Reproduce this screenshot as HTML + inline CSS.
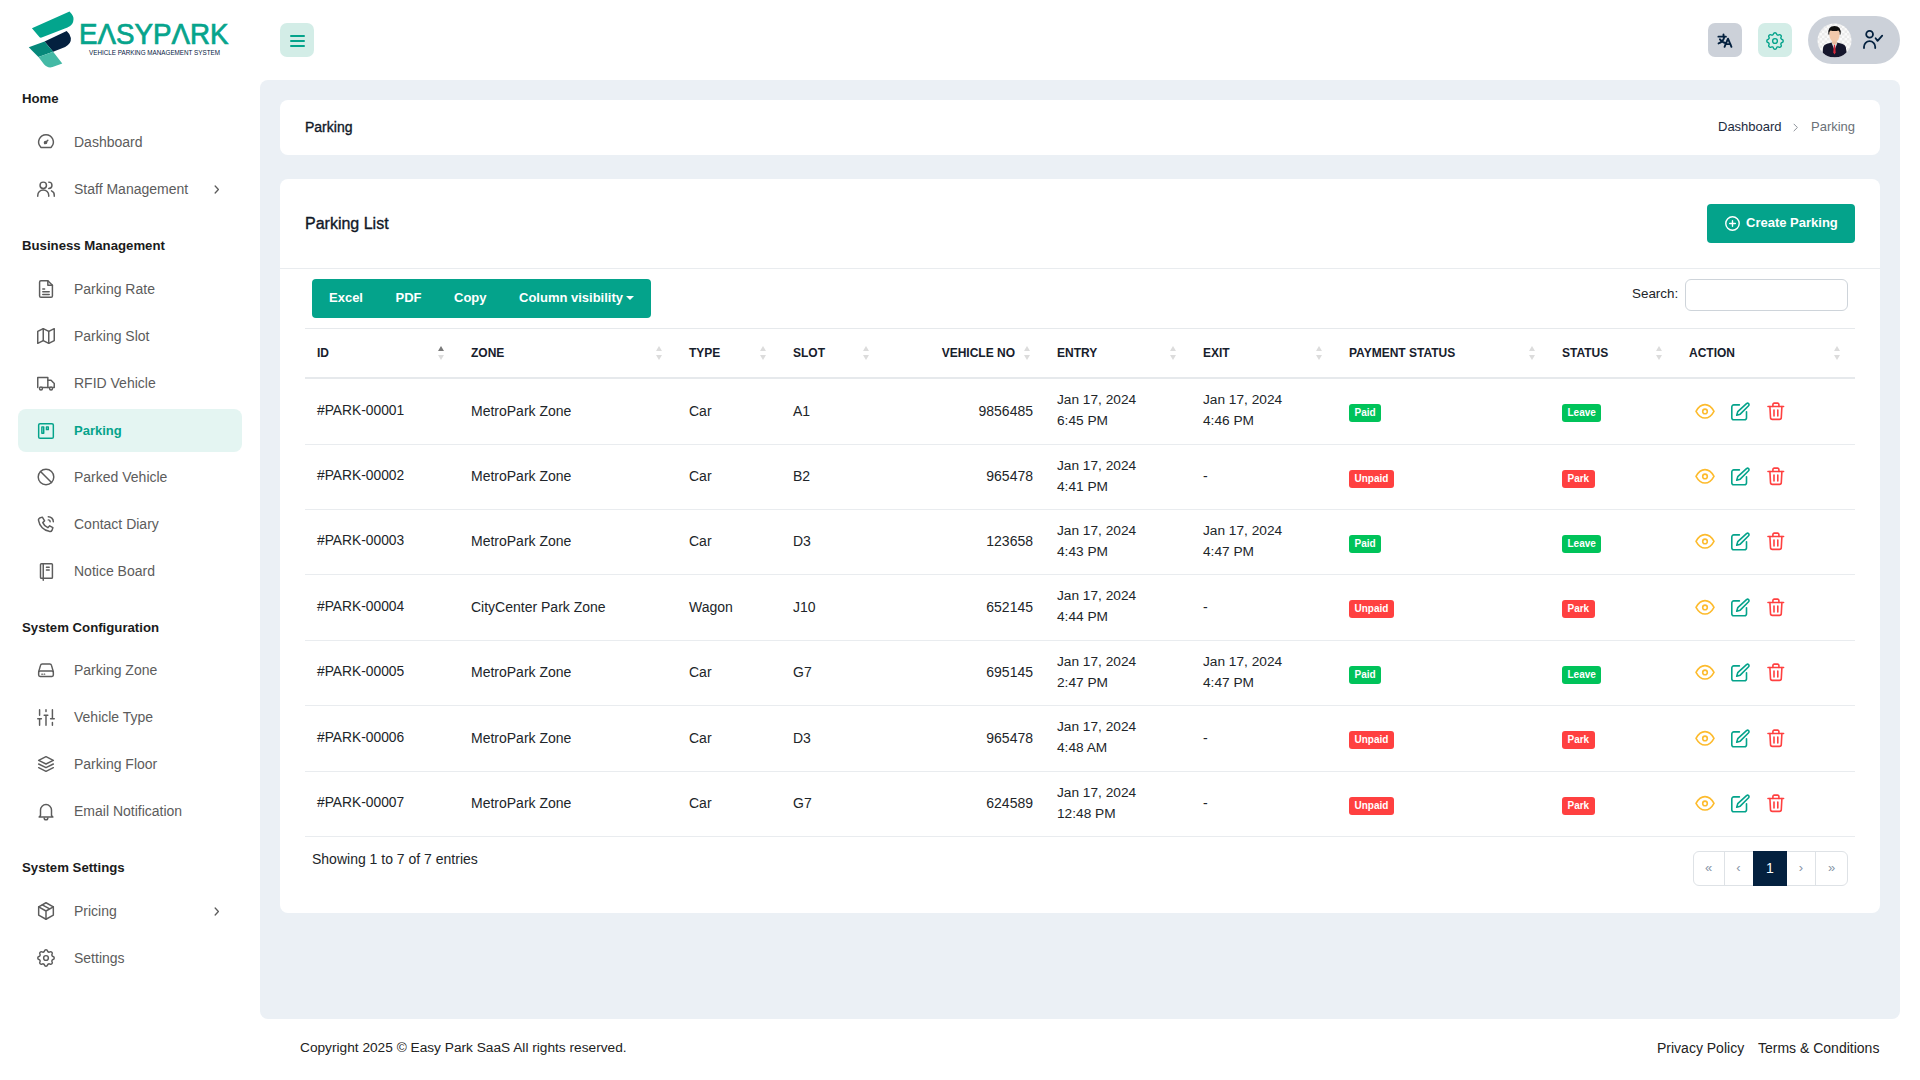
<!DOCTYPE html>
<html><head><meta charset="utf-8">
<style>
*{box-sizing:border-box;margin:0;padding:0}
html,body{width:1920px;height:1080px;overflow:hidden;background:#fff}
body{position:relative;font-family:"Liberation Sans",sans-serif;color:#212529}
.abs{position:absolute}
.sec{position:absolute;left:22px;font-size:13.2px;font-weight:bold;color:#1b1b1b;line-height:20px;height:20px;white-space:nowrap}
.item{position:absolute;left:18px;width:224px;height:43px;border-radius:8px;display:flex;align-items:center;font-size:14px;color:#5c5c5c;white-space:nowrap}
.item svg{position:absolute;left:16.75px;top:10.5px;width:22px;height:22px;fill:none;stroke:#5c5c5c;stroke-width:1.6;stroke-linecap:round;stroke-linejoin:round}
.item span{position:absolute;left:56px;line-height:20px;top:11.75px}
.item .chev{position:absolute;left:193px;top:15px;width:12px;height:12px;stroke-width:1.6}
.item.active{background:#e4f5f2;color:#04a38b;font-weight:bold;font-size:13px}
.item.active svg{stroke:#04a38b}
.hbtn{position:absolute;top:23px;width:34px;height:34px;border-radius:7px}

.med{-webkit-text-stroke:0.35px currentColor}
.th{position:absolute;top:342.5px;font-size:12px;font-weight:bold;color:#17202c;line-height:20px;white-space:nowrap}
.sort{position:absolute;top:346px;width:8px;height:15px}
.sort i{position:absolute;left:0;width:0;height:0;border-left:3.5px solid transparent;border-right:3.5px solid transparent}
.sort .up{top:0;border-bottom:5.5px solid #dcdcdc}
.sort .dn{top:9px;border-top:5.5px solid #dcdcdc}
.sort.asc .up{border-bottom-color:#7a7a7a}
.td{position:absolute;font-size:14px;color:#212529;line-height:20px;white-space:nowrap}
.td.id{font-size:13.8px}
.td2{position:absolute;font-size:13.7px;color:#212529;line-height:21px;white-space:nowrap}
.badge{position:absolute;height:18px;line-height:18px;padding:0 5.5px;font-size:10px;font-weight:bold;color:#fff;border-radius:3px;white-space:nowrap}
.bg-s{background:#00c35a}
.bg-d{background:#ff4040}
.ico{position:absolute;width:24px;height:24px;fill:none;stroke-width:1.6;stroke-linecap:round;stroke-linejoin:round}
.eye{stroke:#fdbb2d}
.edit{stroke:#04a38b}
.del{stroke:#ff4040}
</style></head>
<body>
<!-- LOGO -->
<svg class="abs" style="left:20px;top:5px" width="220" height="70" viewBox="0 0 1920 611">
  <path d="M104 202 L432 56 Q470 95 467 125 Q466 150 455 165 Q440 185 414 197 L189 284 Q178 287 171 282 Z" fill="#03a58d"/>
  <path d="M214 319 L407 227 Q440 255 444 287 Q446 315 434 332 Q418 355 394 367 L289 407 Z" fill="#04213f"/>
  <path d="M76 369 L214 319 L289 407 L161 454 Z" fill="#06887a"/>
  <path d="M161 454 L289 407 L369 510 L284 542 Q255 550 234 537 Q218 528 209 517 Z" fill="#44b9a5"/>
</svg>
<div class="abs" style="left:79px;top:16.9px;font-size:28px;font-weight:normal;-webkit-text-stroke:0.7px #07a48c;color:#07a48c;letter-spacing:0px;line-height:34px;transform:scale(0.99,1.05);transform-origin:0 0;white-space:nowrap">EΛSYPΛRK</div>
<div class="abs" style="left:89px;top:48.8px;font-size:6.3px;color:#05213f;line-height:8px;letter-spacing:0px;white-space:nowrap">VEHICLE PARKING MANAGEMENT SYSTEM</div>

<!-- SIDEBAR -->
<div class="sec" style="top:89px">Home</div>
<div class="item" style="top:120px"><svg viewBox="0 0 24 24"><path d="M12 4a8 8 0 0 0-6 13.3l.7.7h10.6l.7-.7A8 8 0 0 0 12 4z"/><path d="M10.5 13.5l3.5-3.5"/><circle cx="11.5" cy="12.5" r="1.2"/></svg><span>Dashboard</span></div>
<div class="item" style="top:167px"><svg viewBox="0 0 24 24"><circle cx="9" cy="8" r="3.5"/><path d="M3 20v-1a6 6 0 0 1 12 0v1"/><path d="M15 4.5a3.5 3.5 0 0 1 0 7"/><path d="M18 14a5 5 0 0 1 3 5v1"/></svg><span>Staff Management</span><svg class="chev" viewBox="0 0 24 24" style="left:192px;top:16px;width:13px;height:13px;stroke-width:2.4"><path d="M9.5 5.5l6 6.5-6 6.5"/></svg></div>

<div class="sec" style="top:236px">Business Management</div>
<div class="item" style="top:267px"><svg viewBox="0 0 24 24"><path d="M5 4.5A1.5 1.5 0 0 1 6.5 3H14l5 5v11.5a1.5 1.5 0 0 1-1.5 1.5h-11A1.5 1.5 0 0 1 5 19.5z"/><path d="M14 3v5h5"/><path d="M8.5 12h2M8.5 15h7M8.5 18h7"/></svg><span>Parking Rate</span></div>
<div class="item" style="top:314px"><svg viewBox="0 0 24 24"><path d="M3 7l6-3 6 3 6-3v13l-6 3-6-3-6 3z"/><path d="M9 4v13M15 7v13"/></svg><span>Parking Slot</span></div>
<div class="item" style="top:361px"><svg viewBox="0 0 24 24"><path d="M3 17V6h11v11"/><path d="M14 9h3.5l3.5 3.5V17h-1.5"/><circle cx="6.5" cy="18" r="1.6"/><circle cx="17.5" cy="18" r="1.6"/><path d="M8 17h8"/></svg><span>RFID Vehicle</span></div>
<div class="item active" style="top:409px"><svg viewBox="0 0 24 24"><rect x="4" y="4" width="16" height="16" rx="1.5"/><rect x="7.5" y="7.5" width="2" height="7"/><rect x="12.5" y="7.5" width="2" height="3"/></svg><span>Parking</span></div>
<div class="item" style="top:455px"><svg viewBox="0 0 24 24"><circle cx="12" cy="12" r="8.5"/><path d="M6 6l12 12"/></svg><span>Parked Vehicle</span></div>
<div class="item" style="top:502px"><svg viewBox="0 0 24 24"><path d="M14.5 4a5.5 5.5 0 0 1 5.5 5.5"/><path d="M14.5 7.5a2 2 0 0 1 2 2"/><path d="M8 4.5L5 5.5c-1 .5-1.5 1.5-1 3a14 14 0 0 0 11.5 11.5c1.5.5 2.5 0 3-1l1-3-3.5-2-2 2a10 10 0 0 1-5.5-5.5l2-2z"/></svg><span>Contact Diary</span></div>
<div class="item" style="top:549px"><svg viewBox="0 0 24 24"><rect x="6" y="4" width="13" height="16" rx="1"/><path d="M9 4v18"/><path d="M12.5 8h3M12.5 11h3"/></svg><span>Notice Board</span></div>

<div class="sec" style="top:618px">System Configuration</div>
<div class="item" style="top:648px"><svg viewBox="0 0 24 24"><path d="M4 14l2-7a2 2 0 0 1 2-1.5h8a2 2 0 0 1 2 1.5l2 7"/><rect x="4" y="13" width="16" height="6" rx="1.5"/><path d="M7.5 16.5h.5M10 16.5h.5"/></svg><span>Parking Zone</span></div>
<div class="item" style="top:695px"><svg viewBox="0 0 24 24"><path d="M5 4v6M5 14v7M3 14h4M12 4v2M12 10v11M10 10h4M19 4v10M19 18v3M17 14h4"/></svg><span>Vehicle Type</span></div>
<div class="item" style="top:742px"><svg viewBox="0 0 24 24"><path d="M12 4l8 4-8 4-8-4z"/><path d="M4 12l8 4 8-4"/><path d="M4 16l8 4 8-4"/></svg><span>Parking Floor</span></div>
<div class="item" style="top:789px"><svg viewBox="0 0 24 24"><path d="M6 17V11a6 6 0 0 1 12 0v6l1.5 1.5h-15z"/><path d="M10 19.5a2 2 0 0 0 4 0"/></svg><span>Email Notification</span></div>

<div class="sec" style="top:858px">System Settings</div>
<div class="item" style="top:889px"><svg viewBox="0 0 24 24"><path d="M12 3l8 4.5v9L12 21l-8-4.5v-9z"/><path d="M4 7.5l8 4.5 8-4.5M12 12v9M8 5.3l8 4.5"/></svg><span>Pricing</span><svg class="chev" viewBox="0 0 24 24" style="left:192px;top:16px;width:13px;height:13px;stroke-width:2.4"><path d="M9.5 5.5l6 6.5-6 6.5"/></svg></div>
<div class="item" style="top:936px"><svg viewBox="0 0 24 24"><path d="M10.325 4.317c.426-1.756 2.924-1.756 3.35 0a1.724 1.724 0 0 0 2.573 1.066c1.543-.94 3.31.826 2.37 2.37a1.724 1.724 0 0 0 1.065 2.572c1.756.426 1.756 2.924 0 3.35a1.724 1.724 0 0 0-1.066 2.573c.94 1.543-.826 3.31-2.37 2.37a1.724 1.724 0 0 0-2.572 1.065c-.426 1.756-2.924 1.756-3.35 0a1.724 1.724 0 0 0-2.573-1.066c-1.543.94-3.31-.826-2.37-2.37a1.724 1.724 0 0 0-1.065-2.572c-1.756-.426-1.756-2.924 0-3.35a1.724 1.724 0 0 0 1.066-2.573c-.94-1.543.826-3.31 2.37-2.37c1 .608 2.296.07 2.572-1.065z"/><circle cx="12" cy="12" r="2.6"/></svg><span>Settings</span></div>

<!-- HEADER -->
<div class="hbtn" style="left:280px;background:#d3ede7">
  <div class="abs" style="left:10px;top:12px;width:15px;height:2px;background:#04a38b;border-radius:1px"></div>
  <div class="abs" style="left:10px;top:17px;width:15px;height:2px;background:#04a38b;border-radius:1px"></div>
  <div class="abs" style="left:10px;top:22px;width:15px;height:2px;background:#04a38b;border-radius:1px"></div>
</div>
<div class="hbtn" style="left:1708px;background:#ccd1d9">
  <svg class="abs" style="left:8px;top:9px" width="18" height="18" viewBox="0 0 24 24" fill="none" stroke="#04213f" stroke-width="2.5" stroke-linecap="round" stroke-linejoin="round"><path d="M3.2 6.2h10"/><path d="M10 3.4v2.8"/><path d="M11.2 6.4c-1 4.2-3.6 7.4-7.8 8.9"/><path d="M5.2 9.6c1.6 2.8 4.4 4.6 8.2 5.4"/><path d="M11.4 19.8l4.6-11 4.6 11"/><path d="M12.9 16.2h6.2"/></svg>
</div>
<div class="hbtn" style="left:1758px;background:#d3ede7">
  <svg class="abs" style="left:6.3px;top:7px" width="22" height="22" viewBox="0 0 24 24" fill="none" stroke="#04a38b" stroke-width="1.5" stroke-linecap="round" stroke-linejoin="round"><path d="M10.325 4.317c.426-1.756 2.924-1.756 3.35 0a1.724 1.724 0 0 0 2.573 1.066c1.543-.94 3.31.826 2.37 2.37a1.724 1.724 0 0 0 1.065 2.572c1.756.426 1.756 2.924 0 3.35a1.724 1.724 0 0 0-1.066 2.573c.94 1.543-.826 3.31-2.37 2.37a1.724 1.724 0 0 0-2.572 1.065c-.426 1.756-2.924 1.756-3.35 0a1.724 1.724 0 0 0-2.573-1.066c-1.543.94-3.31-.826-2.37-2.37a1.724 1.724 0 0 0-1.065-2.572c-1.756-.426-1.756-2.924 0-3.35a1.724 1.724 0 0 0 1.066-2.573c-.94-1.543.826-3.31 2.37-2.37c1 .608 2.296.07 2.572-1.065z"/><circle cx="12" cy="12" r="2.6"/></svg>
</div>
<div class="abs" style="left:1808px;top:16px;width:92px;height:48px;border-radius:24px;background:#ccd1d9">
  <svg class="abs" style="left:8.5px;top:6.5px" width="35" height="35" viewBox="0 0 35 35">
    <defs><clipPath id="avc"><circle cx="17.5" cy="17.5" r="17"/></clipPath>
    <pattern id="chk" width="5" height="5" patternUnits="userSpaceOnUse"><rect width="5" height="5" fill="#fafafa"/><rect width="2.5" height="2.5" fill="#ebebeb"/><rect x="2.5" y="2.5" width="2.5" height="2.5" fill="#ebebeb"/></pattern></defs>
    <g clip-path="url(#avc)">
      <rect width="35" height="35" fill="url(#chk)"/>
      <path d="M5.2 33.5 L6.2 24 Q7 21.5 10 20.8 L15 19.5 L20 19.5 L25 20.8 Q28 21.5 28.8 24 L30.2 33.5 Q17.5 35.5 5.2 33.5z" fill="#15162c"/>
      <path d="M14.5 19.6 L17.5 27 L20.5 19.6z" fill="#e9f6f6"/>
      <path d="M14.3 19.8 L16 23 L17.5 21 L19 23 L20.7 19.8 L21.5 21.5 L17.5 30 L13.5 21.5z" fill="#15162c" opacity="0"/>
      <path d="M16.9 21.2 L18.1 21.2 L18.7 29.5 L17.5 31.5 L16.3 29.5z" fill="#d62639"/>
      <path d="M15.3 16 L19.7 16 L19.9 20.5 L17.5 22 L15.1 20.5z" fill="#e9bea0"/>
      <path d="M12.3 7 L12.3 11 Q12.6 18.6 17.5 18.8 Q22.4 18.6 22.7 11 L22.7 7z" fill="#f2c9ab"/>
      <path d="M11.4 11 Q10.6 3 17.5 3 Q24.4 3 23.6 11 L22.9 12.2 Q23 8.5 21.5 7.6 Q17.5 8.6 13.5 7.6 Q12 8.5 12.1 12.2z" fill="#0e0e0e"/>
    </g>
  </svg>
  <svg class="abs" style="left:53px;top:11px" width="24" height="24" viewBox="0 0 24 24" fill="none" stroke="#04213f" stroke-width="1.8" stroke-linecap="round" stroke-linejoin="round"><circle cx="8.6" cy="7.2" r="3.4"/><path d="M3 21v-1.2a5.6 5.6 0 0 1 11.2 0v1.2"/><path d="M14.6 11.3l2 2.6 4.6-5.3"/></svg>
</div>

<!-- CONTENT BG -->
<div class="abs" style="left:260px;top:80px;width:1640px;height:939px;background:#ebf0f5;border-radius:8px"></div>
<div class="abs" style="left:280px;top:100px;width:1600px;height:55px;background:#fff;border-radius:8px"></div>
<div class="abs" style="left:280px;top:179px;width:1600px;height:734px;background:#fff;border-radius:8px"></div>


<!-- CARD1 -->
<div class="abs med" style="left:305px;top:116.5px;font-size:14px;line-height:20px;color:#111827">Parking</div>
<div class="abs" style="left:1718px;top:117px;font-size:13px;line-height:20px;color:#1c2b3e">Dashboard</div>
<svg class="abs" style="left:1791px;top:123px" width="9" height="9" viewBox="0 0 24 24" fill="none" stroke="#8a8f96" stroke-width="2.6" stroke-linecap="round"><path d="M8 3l9 9-9 9"/></svg>
<div class="abs" style="left:1811px;top:117px;font-size:13px;line-height:20px;color:#6b7178">Parking</div>

<!-- CARD2 HEADER -->
<div class="abs med" style="left:305px;top:214px;font-size:16px;line-height:20px;color:#111827">Parking List</div>
<div class="abs" style="left:280px;top:268px;width:1600px;height:1px;background:#e9ecef"></div>
<div class="abs" style="left:1707px;top:204px;width:148px;height:39px;border-radius:4px;background:#04a38b">
  <svg class="abs" style="left:17px;top:11px" width="17" height="17" viewBox="0 0 24 24" fill="none" stroke="#fff" stroke-width="2" stroke-linecap="round"><circle cx="12" cy="12" r="9.5"/><path d="M12 8v8M8 12h8"/></svg>
  <div class="abs" style="left:39px;top:9px;font-size:13px;font-weight:bold;line-height:20px;color:#fff;white-space:nowrap">Create Parking</div>
</div>

<!-- BUTTON GROUP -->
<div class="abs" style="left:312px;top:279px;width:339px;height:39px;border-radius:4px;background:#04a38b"></div>
<div class="abs" style="left:329px;top:288px;font-size:13px;font-weight:bold;line-height:20px;color:#fff">Excel</div>
<div class="abs" style="left:395.5px;top:288px;font-size:13px;font-weight:bold;line-height:20px;color:#fff">PDF</div>
<div class="abs" style="left:454px;top:288px;font-size:13px;font-weight:bold;line-height:20px;color:#fff">Copy</div>
<div class="abs" style="left:519px;top:288px;font-size:13px;font-weight:bold;line-height:20px;color:#fff;white-space:nowrap">Column visibility</div>
<div class="abs" style="left:626px;top:296px;width:0;height:0;border-left:4px solid transparent;border-right:4px solid transparent;border-top:4.5px solid #fff"></div>

<!-- SEARCH -->
<div class="abs" style="left:1632px;top:283.5px;font-size:13.4px;line-height:20px;color:#212529">Search:</div>
<div class="abs" style="left:1685px;top:279px;width:163px;height:32px;border:1px solid #ced4da;border-radius:6px;background:#fff"></div>

<!--TABLE-->
<div class="abs" style="left:305px;top:328px;width:1550px;height:1px;background:#e6e9ec"></div>
<div class="abs" style="left:305px;top:377px;width:1550px;height:2px;background:#e6e9ec"></div>
<div class="th" style="left:317px">ID</div>
<div class="sort asc" style="left:437.5px"><i class="up"></i><i class="dn"></i></div>
<div class="th" style="left:471px">ZONE</div>
<div class="sort" style="left:655.5px"><i class="up"></i><i class="dn"></i></div>
<div class="th" style="left:689px">TYPE</div>
<div class="sort" style="left:759.5px"><i class="up"></i><i class="dn"></i></div>
<div class="th" style="left:793px">SLOT</div>
<div class="sort" style="left:862.5px"><i class="up"></i><i class="dn"></i></div>
<div class="th" style="left:884px;width:131px;text-align:right">VEHICLE NO</div>
<div class="sort" style="left:1023.5px"><i class="up"></i><i class="dn"></i></div>
<div class="th" style="left:1057px">ENTRY</div>
<div class="sort" style="left:1169.5px"><i class="up"></i><i class="dn"></i></div>
<div class="th" style="left:1203px">EXIT</div>
<div class="sort" style="left:1315.5px"><i class="up"></i><i class="dn"></i></div>
<div class="th" style="left:1349px">PAYMENT STATUS</div>
<div class="sort" style="left:1528.5px"><i class="up"></i><i class="dn"></i></div>
<div class="th" style="left:1562px">STATUS</div>
<div class="sort" style="left:1655.5px"><i class="up"></i><i class="dn"></i></div>
<div class="th" style="left:1689px">ACTION</div>
<div class="sort" style="left:1833.5px"><i class="up"></i><i class="dn"></i></div>
<div class="abs" style="left:305px;top:444px;width:1550px;height:1px;background:#e9ecef"></div>
<div class="td id" style="left:317px;top:400.5px">#PARK-00001</div>
<div class="td" style="left:471px;top:400.5px">MetroPark Zone</div>
<div class="td" style="left:689px;top:400.5px">Car</div>
<div class="td" style="left:793px;top:400.5px">A1</div>
<div class="td" style="left:884px;width:149px;text-align:right;top:400.5px">9856485</div>
<div class="td2" style="left:1057px;top:389.0px">Jan 17, 2024<br>6:45 PM</div>
<div class="td2" style="left:1203px;top:389.0px">Jan 17, 2024<br>4:46 PM</div>
<div class="badge bg-s" style="left:1349px;top:404.0px">Paid</div>
<div class="badge bg-s" style="left:1562px;top:404.0px">Leave</div>
<svg class="ico eye" style="left:1693px;top:399.5px" viewBox="0 0 24 24"><circle cx="12" cy="11.4" r="2.3"/><path d="M3 11.3C5.6 6.6 8.6 4.6 12 4.6C15.4 4.6 18.4 6.6 21 11.3C18.4 16 15.4 18 12 18C8.6 18 5.6 16 3 11.3z"/></svg>
<svg class="ico edit" style="left:1728px;top:399.5px" viewBox="0 0 24 24"><path d="M11.4 4.9H5.8a2 2 0 0 0-2 2v10.8a2 2 0 0 0 2 2h10.7a2 2 0 0 0 2-2v-5.9"/><path d="M18.5 3.7a1.45 1.45 0 0 1 2.1 2.05l-8.4 8.4-3.5 1.05 1.05-3.5z"/></svg>
<svg class="ico del" style="left:1764px;top:399.5px" viewBox="0 0 24 24"><path d="M4 6.5h15.6"/><path d="M10 10v6M13.8 10v6"/><path d="M5.9 6.5l.6 11a1.9 1.9 0 0 0 1.9 1.9h7a1.9 1.9 0 0 0 1.9-1.9l.6-11"/><path d="M8.9 6.5V4.4a1.3 1.3 0 0 1 1.3-1.3h3.4a1.3 1.3 0 0 1 1.3 1.3v2.1"/></svg>
<div class="abs" style="left:305px;top:509px;width:1550px;height:1px;background:#e9ecef"></div>
<div class="td id" style="left:317px;top:466.0px">#PARK-00002</div>
<div class="td" style="left:471px;top:466.0px">MetroPark Zone</div>
<div class="td" style="left:689px;top:466.0px">Car</div>
<div class="td" style="left:793px;top:466.0px">B2</div>
<div class="td" style="left:884px;width:149px;text-align:right;top:466.0px">965478</div>
<div class="td2" style="left:1057px;top:454.5px">Jan 17, 2024<br>4:41 PM</div>
<div class="td" style="left:1203px;top:466.0px">-</div>
<div class="badge bg-d" style="left:1349px;top:469.5px">Unpaid</div>
<div class="badge bg-d" style="left:1562px;top:469.5px">Park</div>
<svg class="ico eye" style="left:1693px;top:465.0px" viewBox="0 0 24 24"><circle cx="12" cy="11.4" r="2.3"/><path d="M3 11.3C5.6 6.6 8.6 4.6 12 4.6C15.4 4.6 18.4 6.6 21 11.3C18.4 16 15.4 18 12 18C8.6 18 5.6 16 3 11.3z"/></svg>
<svg class="ico edit" style="left:1728px;top:465.0px" viewBox="0 0 24 24"><path d="M11.4 4.9H5.8a2 2 0 0 0-2 2v10.8a2 2 0 0 0 2 2h10.7a2 2 0 0 0 2-2v-5.9"/><path d="M18.5 3.7a1.45 1.45 0 0 1 2.1 2.05l-8.4 8.4-3.5 1.05 1.05-3.5z"/></svg>
<svg class="ico del" style="left:1764px;top:465.0px" viewBox="0 0 24 24"><path d="M4 6.5h15.6"/><path d="M10 10v6M13.8 10v6"/><path d="M5.9 6.5l.6 11a1.9 1.9 0 0 0 1.9 1.9h7a1.9 1.9 0 0 0 1.9-1.9l.6-11"/><path d="M8.9 6.5V4.4a1.3 1.3 0 0 1 1.3-1.3h3.4a1.3 1.3 0 0 1 1.3 1.3v2.1"/></svg>
<div class="abs" style="left:305px;top:574px;width:1550px;height:1px;background:#e9ecef"></div>
<div class="td id" style="left:317px;top:531.0px">#PARK-00003</div>
<div class="td" style="left:471px;top:531.0px">MetroPark Zone</div>
<div class="td" style="left:689px;top:531.0px">Car</div>
<div class="td" style="left:793px;top:531.0px">D3</div>
<div class="td" style="left:884px;width:149px;text-align:right;top:531.0px">123658</div>
<div class="td2" style="left:1057px;top:519.5px">Jan 17, 2024<br>4:43 PM</div>
<div class="td2" style="left:1203px;top:519.5px">Jan 17, 2024<br>4:47 PM</div>
<div class="badge bg-s" style="left:1349px;top:534.5px">Paid</div>
<div class="badge bg-s" style="left:1562px;top:534.5px">Leave</div>
<svg class="ico eye" style="left:1693px;top:530.0px" viewBox="0 0 24 24"><circle cx="12" cy="11.4" r="2.3"/><path d="M3 11.3C5.6 6.6 8.6 4.6 12 4.6C15.4 4.6 18.4 6.6 21 11.3C18.4 16 15.4 18 12 18C8.6 18 5.6 16 3 11.3z"/></svg>
<svg class="ico edit" style="left:1728px;top:530.0px" viewBox="0 0 24 24"><path d="M11.4 4.9H5.8a2 2 0 0 0-2 2v10.8a2 2 0 0 0 2 2h10.7a2 2 0 0 0 2-2v-5.9"/><path d="M18.5 3.7a1.45 1.45 0 0 1 2.1 2.05l-8.4 8.4-3.5 1.05 1.05-3.5z"/></svg>
<svg class="ico del" style="left:1764px;top:530.0px" viewBox="0 0 24 24"><path d="M4 6.5h15.6"/><path d="M10 10v6M13.8 10v6"/><path d="M5.9 6.5l.6 11a1.9 1.9 0 0 0 1.9 1.9h7a1.9 1.9 0 0 0 1.9-1.9l.6-11"/><path d="M8.9 6.5V4.4a1.3 1.3 0 0 1 1.3-1.3h3.4a1.3 1.3 0 0 1 1.3 1.3v2.1"/></svg>
<div class="abs" style="left:305px;top:640px;width:1550px;height:1px;background:#e9ecef"></div>
<div class="td id" style="left:317px;top:596.5px">#PARK-00004</div>
<div class="td" style="left:471px;top:596.5px">CityCenter Park Zone</div>
<div class="td" style="left:689px;top:596.5px">Wagon</div>
<div class="td" style="left:793px;top:596.5px">J10</div>
<div class="td" style="left:884px;width:149px;text-align:right;top:596.5px">652145</div>
<div class="td2" style="left:1057px;top:585.0px">Jan 17, 2024<br>4:44 PM</div>
<div class="td" style="left:1203px;top:596.5px">-</div>
<div class="badge bg-d" style="left:1349px;top:600.0px">Unpaid</div>
<div class="badge bg-d" style="left:1562px;top:600.0px">Park</div>
<svg class="ico eye" style="left:1693px;top:595.5px" viewBox="0 0 24 24"><circle cx="12" cy="11.4" r="2.3"/><path d="M3 11.3C5.6 6.6 8.6 4.6 12 4.6C15.4 4.6 18.4 6.6 21 11.3C18.4 16 15.4 18 12 18C8.6 18 5.6 16 3 11.3z"/></svg>
<svg class="ico edit" style="left:1728px;top:595.5px" viewBox="0 0 24 24"><path d="M11.4 4.9H5.8a2 2 0 0 0-2 2v10.8a2 2 0 0 0 2 2h10.7a2 2 0 0 0 2-2v-5.9"/><path d="M18.5 3.7a1.45 1.45 0 0 1 2.1 2.05l-8.4 8.4-3.5 1.05 1.05-3.5z"/></svg>
<svg class="ico del" style="left:1764px;top:595.5px" viewBox="0 0 24 24"><path d="M4 6.5h15.6"/><path d="M10 10v6M13.8 10v6"/><path d="M5.9 6.5l.6 11a1.9 1.9 0 0 0 1.9 1.9h7a1.9 1.9 0 0 0 1.9-1.9l.6-11"/><path d="M8.9 6.5V4.4a1.3 1.3 0 0 1 1.3-1.3h3.4a1.3 1.3 0 0 1 1.3 1.3v2.1"/></svg>
<div class="abs" style="left:305px;top:705px;width:1550px;height:1px;background:#e9ecef"></div>
<div class="td id" style="left:317px;top:662.0px">#PARK-00005</div>
<div class="td" style="left:471px;top:662.0px">MetroPark Zone</div>
<div class="td" style="left:689px;top:662.0px">Car</div>
<div class="td" style="left:793px;top:662.0px">G7</div>
<div class="td" style="left:884px;width:149px;text-align:right;top:662.0px">695145</div>
<div class="td2" style="left:1057px;top:650.5px">Jan 17, 2024<br>2:47 PM</div>
<div class="td2" style="left:1203px;top:650.5px">Jan 17, 2024<br>4:47 PM</div>
<div class="badge bg-s" style="left:1349px;top:665.5px">Paid</div>
<div class="badge bg-s" style="left:1562px;top:665.5px">Leave</div>
<svg class="ico eye" style="left:1693px;top:661.0px" viewBox="0 0 24 24"><circle cx="12" cy="11.4" r="2.3"/><path d="M3 11.3C5.6 6.6 8.6 4.6 12 4.6C15.4 4.6 18.4 6.6 21 11.3C18.4 16 15.4 18 12 18C8.6 18 5.6 16 3 11.3z"/></svg>
<svg class="ico edit" style="left:1728px;top:661.0px" viewBox="0 0 24 24"><path d="M11.4 4.9H5.8a2 2 0 0 0-2 2v10.8a2 2 0 0 0 2 2h10.7a2 2 0 0 0 2-2v-5.9"/><path d="M18.5 3.7a1.45 1.45 0 0 1 2.1 2.05l-8.4 8.4-3.5 1.05 1.05-3.5z"/></svg>
<svg class="ico del" style="left:1764px;top:661.0px" viewBox="0 0 24 24"><path d="M4 6.5h15.6"/><path d="M10 10v6M13.8 10v6"/><path d="M5.9 6.5l.6 11a1.9 1.9 0 0 0 1.9 1.9h7a1.9 1.9 0 0 0 1.9-1.9l.6-11"/><path d="M8.9 6.5V4.4a1.3 1.3 0 0 1 1.3-1.3h3.4a1.3 1.3 0 0 1 1.3 1.3v2.1"/></svg>
<div class="abs" style="left:305px;top:771px;width:1550px;height:1px;background:#e9ecef"></div>
<div class="td id" style="left:317px;top:727.5px">#PARK-00006</div>
<div class="td" style="left:471px;top:727.5px">MetroPark Zone</div>
<div class="td" style="left:689px;top:727.5px">Car</div>
<div class="td" style="left:793px;top:727.5px">D3</div>
<div class="td" style="left:884px;width:149px;text-align:right;top:727.5px">965478</div>
<div class="td2" style="left:1057px;top:716.0px">Jan 17, 2024<br>4:48 AM</div>
<div class="td" style="left:1203px;top:727.5px">-</div>
<div class="badge bg-d" style="left:1349px;top:731.0px">Unpaid</div>
<div class="badge bg-d" style="left:1562px;top:731.0px">Park</div>
<svg class="ico eye" style="left:1693px;top:726.5px" viewBox="0 0 24 24"><circle cx="12" cy="11.4" r="2.3"/><path d="M3 11.3C5.6 6.6 8.6 4.6 12 4.6C15.4 4.6 18.4 6.6 21 11.3C18.4 16 15.4 18 12 18C8.6 18 5.6 16 3 11.3z"/></svg>
<svg class="ico edit" style="left:1728px;top:726.5px" viewBox="0 0 24 24"><path d="M11.4 4.9H5.8a2 2 0 0 0-2 2v10.8a2 2 0 0 0 2 2h10.7a2 2 0 0 0 2-2v-5.9"/><path d="M18.5 3.7a1.45 1.45 0 0 1 2.1 2.05l-8.4 8.4-3.5 1.05 1.05-3.5z"/></svg>
<svg class="ico del" style="left:1764px;top:726.5px" viewBox="0 0 24 24"><path d="M4 6.5h15.6"/><path d="M10 10v6M13.8 10v6"/><path d="M5.9 6.5l.6 11a1.9 1.9 0 0 0 1.9 1.9h7a1.9 1.9 0 0 0 1.9-1.9l.6-11"/><path d="M8.9 6.5V4.4a1.3 1.3 0 0 1 1.3-1.3h3.4a1.3 1.3 0 0 1 1.3 1.3v2.1"/></svg>
<div class="abs" style="left:305px;top:836px;width:1550px;height:1px;background:#e9ecef"></div>
<div class="td id" style="left:317px;top:793.0px">#PARK-00007</div>
<div class="td" style="left:471px;top:793.0px">MetroPark Zone</div>
<div class="td" style="left:689px;top:793.0px">Car</div>
<div class="td" style="left:793px;top:793.0px">G7</div>
<div class="td" style="left:884px;width:149px;text-align:right;top:793.0px">624589</div>
<div class="td2" style="left:1057px;top:781.5px">Jan 17, 2024<br>12:48 PM</div>
<div class="td" style="left:1203px;top:793.0px">-</div>
<div class="badge bg-d" style="left:1349px;top:796.5px">Unpaid</div>
<div class="badge bg-d" style="left:1562px;top:796.5px">Park</div>
<svg class="ico eye" style="left:1693px;top:792.0px" viewBox="0 0 24 24"><circle cx="12" cy="11.4" r="2.3"/><path d="M3 11.3C5.6 6.6 8.6 4.6 12 4.6C15.4 4.6 18.4 6.6 21 11.3C18.4 16 15.4 18 12 18C8.6 18 5.6 16 3 11.3z"/></svg>
<svg class="ico edit" style="left:1728px;top:792.0px" viewBox="0 0 24 24"><path d="M11.4 4.9H5.8a2 2 0 0 0-2 2v10.8a2 2 0 0 0 2 2h10.7a2 2 0 0 0 2-2v-5.9"/><path d="M18.5 3.7a1.45 1.45 0 0 1 2.1 2.05l-8.4 8.4-3.5 1.05 1.05-3.5z"/></svg>
<svg class="ico del" style="left:1764px;top:792.0px" viewBox="0 0 24 24"><path d="M4 6.5h15.6"/><path d="M10 10v6M13.8 10v6"/><path d="M5.9 6.5l.6 11a1.9 1.9 0 0 0 1.9 1.9h7a1.9 1.9 0 0 0 1.9-1.9l.6-11"/><path d="M8.9 6.5V4.4a1.3 1.3 0 0 1 1.3-1.3h3.4a1.3 1.3 0 0 1 1.3 1.3v2.1"/></svg>
<!--/TABLE-->

<!-- FOOT OF CARD -->
<div class="abs" style="left:312px;top:848.5px;font-size:14px;line-height:20px;color:#212529;white-space:nowrap">Showing 1 to 7 of 7 entries</div>
<div class="abs" style="left:1693px;top:851px;width:155px;height:35px;border:1px solid #dee2e6;border-radius:6px;background:#fff"></div>
<div class="abs" style="left:1724px;top:851px;width:1px;height:35px;background:#dee2e6"></div>
<div class="abs" style="left:1815px;top:851px;width:1px;height:35px;background:#dee2e6"></div>
<div class="abs" style="left:1753px;top:851px;width:34px;height:35px;background:#04213f"></div>
<div class="abs" style="left:1753px;top:858px;width:34px;text-align:center;font-size:14px;line-height:20px;color:#fff">1</div>
<div class="abs" style="left:1693px;top:858px;width:31px;text-align:center;font-size:13px;line-height:20px;color:#8796a8">«</div>
<div class="abs" style="left:1724px;top:858px;width:29px;text-align:center;font-size:13px;line-height:20px;color:#8796a8">‹</div>
<div class="abs" style="left:1787px;top:858px;width:28px;text-align:center;font-size:13px;line-height:20px;color:#8796a8">›</div>
<div class="abs" style="left:1815px;top:858px;width:33px;text-align:center;font-size:13px;line-height:20px;color:#8796a8">»</div>

<!-- FOOTER -->
<div class="abs" style="left:300px;top:1038px;font-size:13.7px;line-height:20px;color:#222">Copyright 2025 © Easy Park SaaS All rights reserved.</div>
<div class="abs" style="left:1657px;top:1038px;font-size:14px;line-height:20px;color:#222">Privacy Policy</div>
<div class="abs" style="left:1758px;top:1038px;font-size:14px;line-height:20px;color:#222">Terms &amp; Conditions</div>
</body></html>
